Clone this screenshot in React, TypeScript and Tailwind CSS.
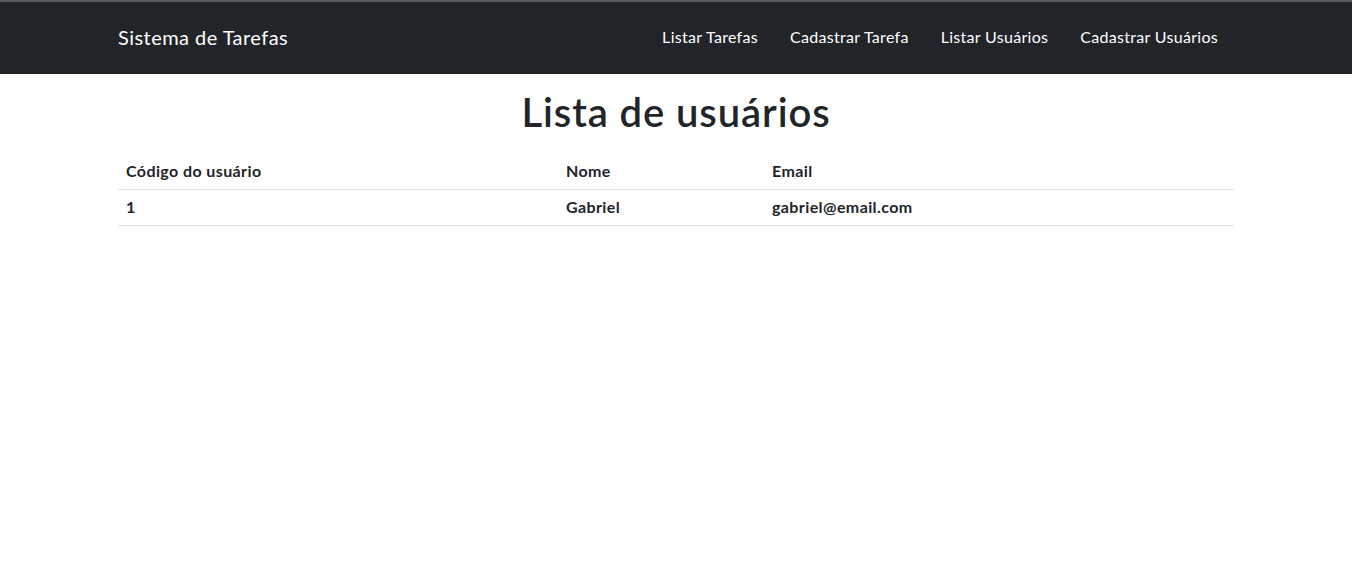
import React from 'react';

type Usuario = { id: number; nome: string; email: string };

const usuarios: Usuario[] = [{ id: 1, nome: 'Gabriel', email: 'gabriel@email.com' }];

const links = ['Listar Tarefas', 'Cadastrar Tarefa', 'Listar Usuários', 'Cadastrar Usuários'];

const App: React.FC = () => {
  return (
    <div className="min-h-screen bg-white text-[#212529] font-['Lato','Open_Sans',sans-serif]">
      {/* Navbar */}
      <nav className="h-[74px] bg-[#212529] border-t-2 border-[#5c5c5c]">
        <div className="mx-auto flex h-full w-[1140px] items-center justify-between px-3">
          <a href="#" className="pb-[3px] text-[20px] tracking-[0.45px] text-white">
            Sistema de Tarefas
          </a>
          <ul className="flex">
            {links.map((l) => (
              <li key={l}>
                <a href="#" className="block px-4 pb-[2px] text-[16px] tracking-[0.3px] text-white">
                  {l}
                </a>
              </li>
            ))}
          </ul>
        </div>
      </nav>

      {/* Conteúdo */}
      <main className="mx-auto w-[1140px] px-3">
        <h1 className="mt-[14px] mb-[18px] text-center text-[40px] leading-[48px] tracking-[0.9px] font-semibold">
          Lista de usuários
        </h1>
        <table className="w-full border-collapse text-[16px] font-bold tracking-[0.4px]">
          <thead>
            <tr className="border-b border-[#dee2e6]">
              <th className="w-[440px] px-2 pt-[5px] pb-[6px] text-left leading-6">Código do usuário</th>
              <th className="w-[206px] px-2 pt-[5px] pb-[6px] text-left leading-6">Nome</th>
              <th className="px-2 pt-[5px] pb-[6px] text-left leading-6">Email</th>
            </tr>
          </thead>
          <tbody>
            {usuarios.map((u) => (
              <tr key={u.id} className="border-b border-[#dee2e6]">
                <td className="px-2 pt-[5px] pb-[6px] leading-6">{u.id}</td>
                <td className="px-2 pt-[5px] pb-[6px] leading-6">{u.nome}</td>
                <td className="px-2 pt-[5px] pb-[6px] leading-6">{u.email}</td>
              </tr>
            ))}
          </tbody>
        </table>
      </main>
    </div>
  );
};

export default App;
